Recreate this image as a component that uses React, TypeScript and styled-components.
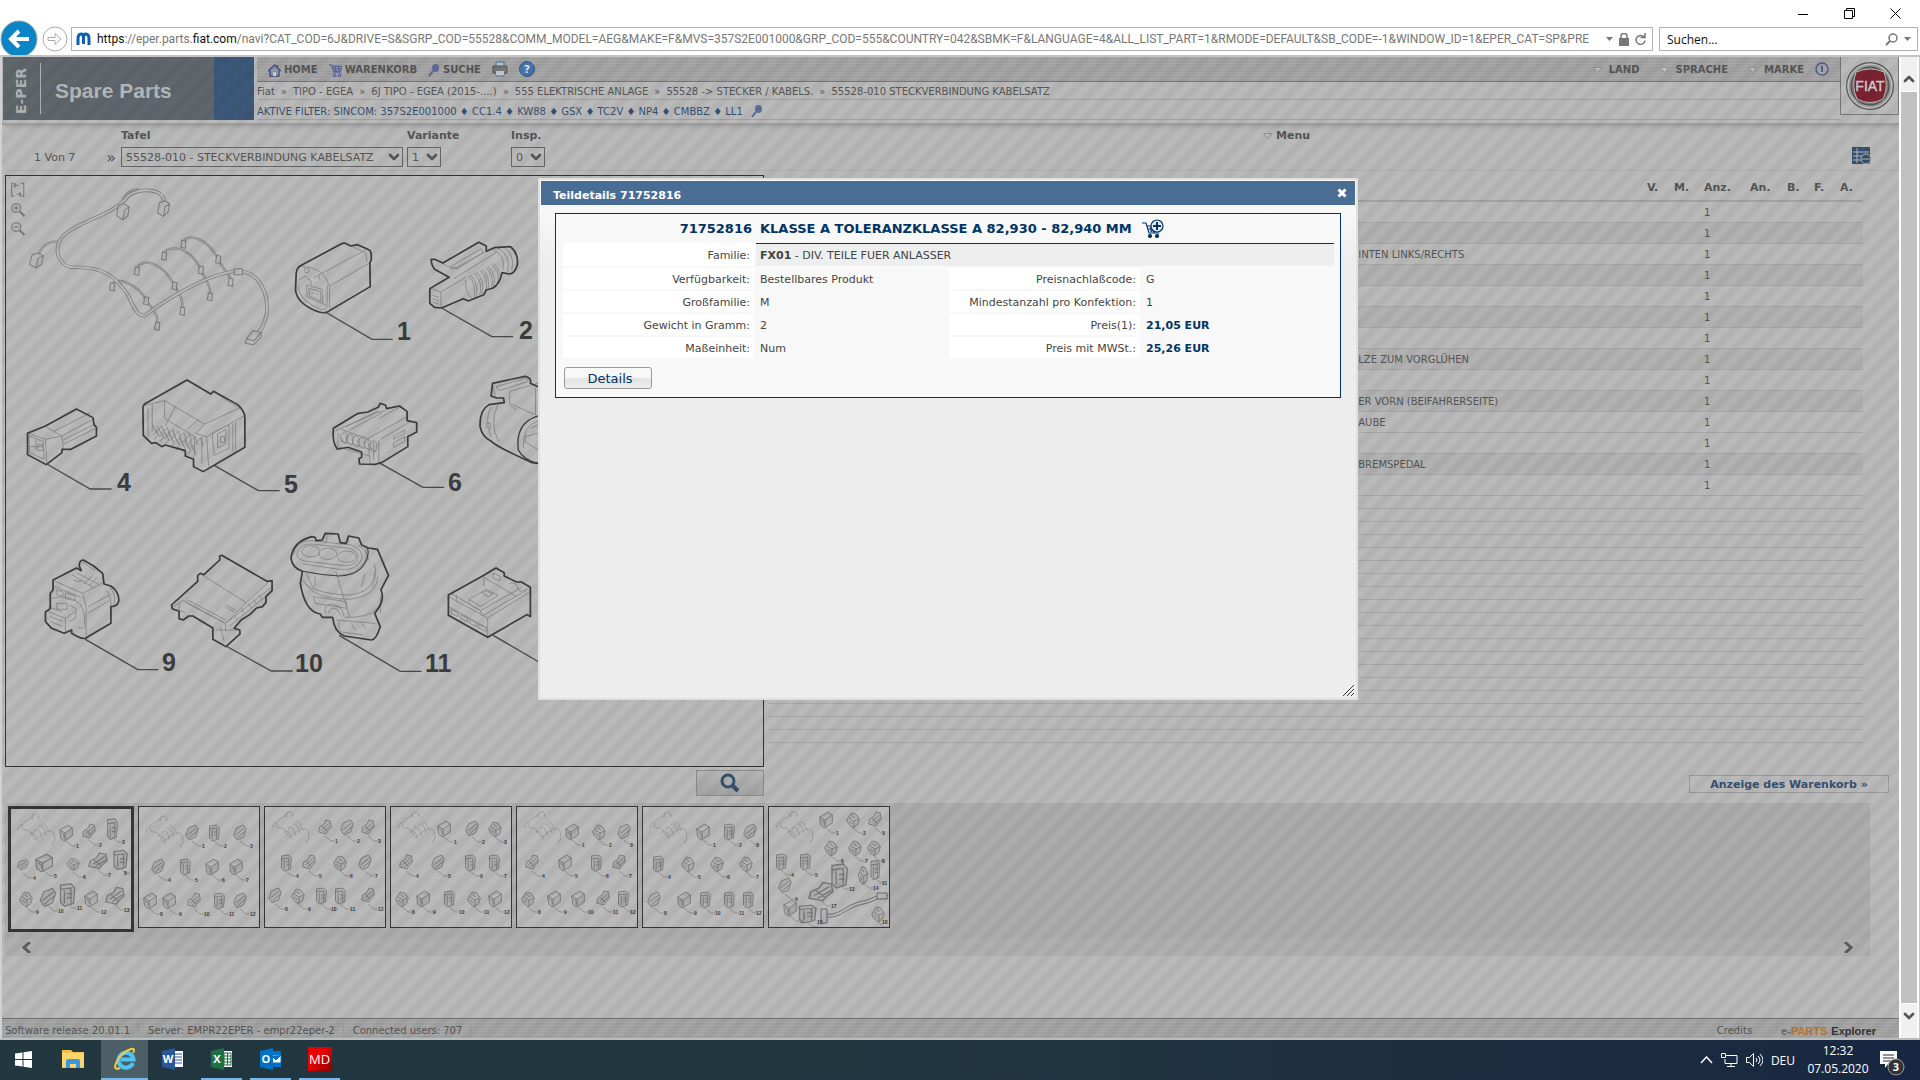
import React from "react";
import styled, { createGlobalStyle, css } from "styled-components";
import { ChevronDown, ChevronUp } from "lucide-react";

const uiFont = '"DejaVu Sans", Verdana, sans-serif';
const sysFont = '"Open Sans", "Noto Sans", sans-serif';
const navy = "#36506f";

const Global = createGlobalStyle`
  * { box-sizing: border-box; }
  body { margin: 0; font-family: ${uiFont}; font-size: 10px; color: #555; }
  button, input, select { font: inherit; color: inherit; margin: 0; padding: 0; }
  svg { display: block; }
`;

const Screen = styled.div`
  display: flex;
  flex-direction: column;
  height: 100vh;
  overflow: hidden;
  background: #fff;
`;

/* ---------- browser frame ---------- */
const Chrome = styled.header`
  flex: none;
  height: 57px;
  display: flex;
  flex-direction: column;
  overflow: hidden;
  font-family: ${sysFont};
  border-bottom: 2px solid #c4c4c4;
`;
const WindowBar = styled.div`
  height: 27px;
  flex: none;
  display: flex;
  justify-content: flex-end;
  padding: 0 2px;
`;
const WindowButton = styled.button`
  width: 46px;
  height: 27px;
  border: 0;
  background: none;
  display: flex;
  align-items: center;
  justify-content: center;
`;
const AddressBar = styled.div`
  height: 24px;
  display: flex;
  align-items: center;
  gap: 6px;
  padding-right: 2px;
`;
const NavButtons = styled.div`
  width: 65px;
  height: 24px;
  display: flex;
  align-items: center;
  gap: 4px;
`;
const RoundButton = styled.button<{ $size: number }>`
  flex: none;
  width: ${(p) => p.$size}px;
  height: ${(p) => p.$size}px;
  border: 0;
  background: none;
`;
const Field = styled.div<{ $fill?: boolean }>`
  height: 24px;
  border: 1px solid #b0b0b0;
  display: flex;
  align-items: center;
  gap: 6px;
  padding: 0 6px 0 4px;
  background: #fff;
  font-size: 12px;
  ${(p) => (p.$fill ? css`flex: 1; min-width: 0;` : css`flex: 0 0 259px;`)}
`;
const Url = styled.a`
  flex: 1;
  min-width: 0;
  overflow: hidden;
  white-space: nowrap;
  font-family: Roboto, sans-serif;
  font-size: 12px;
  color: #777;
  text-decoration: none;
  b { font-weight: 400; color: #111; }
`;
const SearchInput = styled.input`
  flex: 1;
  min-width: 0;
  border: 0;
  outline: 0;
  padding-left: 3px;
  color: #111;
  &::placeholder { color: #111; opacity: 1; }
`;

/* ---------- page ---------- */
const Viewport = styled.div`
  flex: 1;
  min-height: 0;
  display: flex;
  border-bottom: 2px solid #b9bcbd;
`;
const Page = styled.main`
  position: relative;
  flex: 1;
  min-width: 0;
  display: flex;
  flex-direction: column;
  border-left: 2px solid #d0d0d0;
  background: #b9b9b9;
`;
const Stripes = styled.div`
  position: absolute;
  inset: 0;
  pointer-events: none;
  background: linear-gradient(135deg, rgba(0,0,0,0.04) 25%, transparent 25%, transparent 50%, rgba(0,0,0,0.04) 50%, rgba(0,0,0,0.04) 75%, transparent 75%);
  background-size: 20px 20px;
`;
const scan = "repeating-linear-gradient(#a9a9a9 0 1px, #a1a1a1 1px 3px)";

const Header = styled.div`
  flex: none;
  display: flex;
  height: 68px;
  border-bottom: 2px solid #9f9f9f;
`;
const Brand = styled.div`
  width: 251px;
  height: 63px;
  margin-left: 1px;
  display: flex;
  align-items: center;
  background: #5f666c;
  border-right: 40px solid #3c5779;
`;
const BrandSide = styled.span`
  writing-mode: vertical-rl;
  transform: rotate(180deg);
  height: 51px;
  padding-left: 12px;
  margin-left: 11px;
  border-left: 1px solid #b0b3b5;
  font: 700 14px/14px "DejaVu Sans", sans-serif;
  color: #aeb1b4;
`;
const BrandName = styled.span`
  margin: 4px 0 0 14px;
  font: 700 21px/24px "Liberation Sans", Arial, sans-serif;
  color: #b4b7b9;
`;
const HeadRows = styled.div`
  flex: 1;
  min-width: 0;
  margin-left: 3px;
`;
const Toolbar = styled.nav`
  height: 25px;
  display: flex;
  align-items: center;
  padding: 0 11px;
  gap: 11px;
  background: ${scan};
  border-bottom: 1px solid #777;
  font-weight: 700;
`;
const ToolLink = styled.a`
  display: flex;
  align-items: center;
  gap: 3px;
  font-size: 10px;
  line-height: 14px;
  padding-top: 2px;
  color: #555;
  text-decoration: none;
`;
const MenuLinks = styled.div`
  display: flex;
  gap: 20px;
  ${ToolLink} { gap: 7px; padding: 1px 0 0; }
`;
const Spacer = styled.div<{ $grow?: number }>`flex: ${(p) => p.$grow ?? 1};`;
const CrumbRow = styled.div`
  display: flex;
  align-items: center;
  height: 18px;
  padding-top: 2px;
  border-bottom: 1px solid #a2a2a2;
  white-space: nowrap;
  gap: 6px;
  a { color: #555; text-decoration: none; }
`;
const FilterRow = styled(CrumbRow)`
  height: 20px;
  padding-top: 4px;
  gap: 8px;
  color: ${navy};
`;
const MakeLogo = styled.div`
  flex: none;
  width: 59px;
  height: 58px;
  border: 1px solid #777;
  border-top: 0;
  display: flex;
  align-items: center;
  justify-content: center;
`;

const Selectors = styled.section`
  flex: none;
  height: 46px;
  margin: 0 1px 0 3px;
  border-bottom: 1px solid #aeaeae;
  display: flex;
  padding-top: 4px;
  font-size: 11px;
  box-shadow: inset 0 4px 4px -3px #999;
`;
const Counter = styled.div`
  width: 116px;
  padding: 20px 5px 0 29px;
  display: flex;
  justify-content: space-between;
  line-height: 18px;
`;
const Guillemet = styled.span`
  font-size: 16px;
`;
const Picker = styled.div<{ $w: number; $gap?: number }>`
  width: ${(p) => p.$w}px;
  margin-right: ${(p) => p.$gap ?? 0}px;
  label { display: block; font-weight: 700; line-height: 14px; height: 18px; }
`;
const SelectBox = styled.div`
  position: relative;
  svg { position: absolute; right: 1px; top: 2px; pointer-events: none; }
`;
const Select = styled.select`
  appearance: none;
  width: 100%;
  height: 20px;
  padding: 1px 0 0 4px;
  border: 1px solid #666;
  border-radius: 0;
  background: transparent;
`;
const MenuLabel = styled.a`
  display: flex;
  gap: 4px;
  height: 14px;
  line-height: 14px;
  align-items: center;
  font-weight: 700;
  color: #555;
  text-decoration: none;
`;
const IconButton = styled.button<{ $m?: string }>`
  border: 0;
  background: none;
  margin: ${(p) => p.$m ?? "0"};
  height: max-content;
`;

const Work = styled.section`
  flex: none;
  display: grid;
  grid-template-columns: 40.3% 1fr;
  padding: 4px 10px 0 3px;
`;
const Viewer = styled.div`
  border: 1px solid #333;
  height: 592px;
  overflow: hidden;
`;
const Right = styled.div`
  padding: 0 26px 0 4px;
`;
const Parts = styled.table`
  width: 100%;
  table-layout: fixed;
  border-collapse: collapse;
  font-size: 10px;
  th { text-align: left; font-size: 11px; padding: 0; height: 26px; border-bottom: 2px solid #a2a2a2; }
  td { padding: 2px 0 0; line-height: 12px; white-space: nowrap; overflow: hidden; }
`;
const PartRow = styled.tr<{ $dark?: boolean; $empty?: boolean }>`
  height: ${(p) => (p.$empty ? 13 : 21)}px;
  background: ${(p) => (p.$dark ? "#b1b1b1" : "transparent")};
  border-bottom: 1px solid #a6a6a6;
`;
const Actions = styled.div`
  flex: none;
  height: 36px;
  display: flex;
  justify-content: space-between;
  align-items: flex-start;
  padding: 3px 10px 0 3px;
`;
const ActionLeft = styled.div`
  width: 40.3%;
  display: flex;
  justify-content: flex-end;
`;
const ZoomButton = styled.button`
  width: 68px;
  height: 26px;
  display: flex;
  align-items: center;
  justify-content: center;
  border: 1px solid #8b8b8b;
  background: linear-gradient(#b5b5b5, #a3a3a3);
`;
const CartButton = styled.button`
  width: 200px;
  height: 18px;
  margin-top: 5px;
  padding-top: 1px;
  border: 1px solid #999;
  background: transparent;
  font-weight: 700;
  font-size: 11px;
  line-height: 14px;
  color: ${navy};
`;

const Strip = styled.section`
  flex: none;
  margin: 0 29px 0 3px;
  background: #afafaf;
`;
const Thumbs = styled.div`
  height: 136px;
  padding: 3px;
  display: flex;
  align-items: flex-start;
  gap: 4px;
  background: #acacac;
`;
const Thumb = styled.button<{ $active?: boolean }>`
  flex: none;
  width: ${(p) => (p.$active ? 126 : 122)}px;
  height: ${(p) => (p.$active ? 126 : 122)}px;
  border: ${(p) => (p.$active ? 3 : 1)}px solid #363636;
  background: #b9b9b9;
`;
const Arrows = styled.div`
  height: 17px;
  display: flex;
  justify-content: space-between;
  align-items: center;
  padding: 0 17px;
`;

const Footer = styled.footer`
  flex: none;
  height: 20px;
  margin-top: auto;
  border-top: 1px solid #6e6e6e;
  background: ${scan};
  display: flex;
  align-items: center;
  padding: 4px 23px 0 3px;
  white-space: nowrap;
`;
const FootItem = styled.span`
  padding-right: 8px;
  margin-right: 9px;
  border-right: 1px solid #989898;
`;
const Explorer = styled.span`
  display: flex;
  align-items: center;
  gap: 4px;
  margin-left: 29px;
  font: 700 11px/14px "Liberation Sans", Arial, sans-serif;
  color: #333;
  em { font-style: normal; color: #666; }
  strong { color: #b9742c; }
`;

const Scroll = styled.aside`
  flex: none;
  width: 21px;
  display: flex;
  flex-direction: column;
  gap: 1px;
  padding: 0 2px;
  background: #fff;
  border-right: 1px solid #c8c8c8;
`;
const ScrollArrow = styled.button<{ $down?: boolean }>`
  height: 34px;
  padding: ${(p) => (p.$down ? "0 0 10px" : "10px 0 0")};
  border: 0;
  background: #f0f0f0;
  display: flex;
  align-items: center;
  justify-content: center;
`;
const ScrollThumb = styled.div`flex: 1; background: #c1c1c1;`;

/* ---------- detail window ---------- */
const Modal = styled.section`
  position: absolute;
  left: 536px;
  top: 121px;
  width: 820px;
  height: 522px;
  padding: 1px;
  border: 2px solid #e0e0e0;
  background: linear-gradient(#fafafa 20px, #ededed 80px);
  font-size: 11px;
  color: #444;
`;
const TitleBar = styled.header`
  height: 24px;
  margin-bottom: 8px;
  padding: 0 8px 0 12px;
  display: flex;
  align-items: center;
  justify-content: space-between;
  background: #4a6d96;
  color: #fff;
  font-weight: 700;
  span { padding-top: 4px; }
`;
const Card = styled.div`
  margin: 0 14px;
  padding: 3px 6px 8px 7px;
  border: 1px solid #036;
  background: #f8f8f8;
`;
const Details = styled.table`
  width: 100%;
  table-layout: fixed;
  border-collapse: separate;
  border-spacing: 0 2px;
  td, th { padding: 1px 4px 0; height: 21px; white-space: nowrap; }
`;
const Label = styled.th`
  background: #fff;
  border-right: 2px solid #f8f8f8;
  font-weight: 400;
  text-align: right;
`;
const TitleRow = styled.tr`
  && th, && td {
    height: 22px;
    padding: 0 4px 3px;
    font-size: 13px;
    line-height: 16px;
    color: #036;
  }
`;
const PartNo = styled.th`
  text-align: right;
`;
const PartTitle = styled.td`
  font-weight: 700;
  div { display: flex; align-items: center; height: 19px; gap: 10px; }
`;
const FamilyRow = styled.tr`
  height: 23px;
`;
const Family = styled.td`
  background: #eee;
  border-top: 1px solid #036;
`;
const Price = styled.td`color: #036; font-weight: 700;`;
const DetailsButton = styled.button`
  display: block;
  width: 88px;
  height: 22px;
  margin: 7px 0 0 1px;
  padding: 1px 0 0 4px;
  border: 1px solid #999;
  border-radius: 3px;
  background: linear-gradient(#f8f8f8 45%, #e2e2e2 55%, #efefef);
  color: #036;
  font-size: 13px;
  line-height: 18px;
`;
const Grip = styled.span`
  position: absolute;
  right: 1px;
  bottom: 1px;
`;

/* ---------- task bar ---------- */
const Taskbar = styled.footer`
  flex: none;
  height: 40px;
  display: flex;
  background: linear-gradient(90deg, #23373f, #213540 50%, #182741);
  font-family: ${sysFont};
  font-size: 12px;
  color: #fff;
`;
const Task = styled.button<{ $open?: boolean; $active?: boolean }>`
  width: ${(p) => (p.$active ? 47 : 41)}px;
  margin-right: ${(p) => (p.$active ? 4 : 8)}px;
  height: 40px;
  border: 0;
  border-bottom: 2px solid ${(p) => (p.$open || p.$active ? "#76b9ed" : "transparent")};
  background: ${(p) => (p.$active ? "#4c5e66" : "none")};
  display: flex;
  align-items: center;
  justify-content: center;
`;
const Tasks = styled.div`
  display: flex;
  flex: 1;
  padding-left: 3px;
`;
const MdIcon = styled.span`
  width: 24px;
  height: 24px;
  background: linear-gradient(135deg, #e90000 40%, #8a0000);
  color: #fff;
  font-size: 13px;
  line-height: 24px;
  text-align: center;
`;
const Tray = styled.div`
  display: flex;
  align-items: center;
  gap: 8px;
`;
const Clock = styled.time`
  width: 62px;
  margin-left: 4px;
  line-height: 18px;
  text-align: center;
`;
const Notice = styled.div`
  margin: 6px 14px 0 3px;
`;

/* ---------- drawings ---------- */
const heavy = { fill: "none", stroke: "#3d3d3d", strokeWidth: 5, strokeLinejoin: "round" as const };
const fine = { fill: "none", stroke: "#858585", strokeWidth: 2.5 };

const trunk = "M475 100 C485 55 400 50 370 80 C330 140 195 160 172 215 C155 260 185 290 210 292 C300 288 335 320 372 375 C392 425 405 440 420 437 C475 395 600 310 690 303 C765 305 790 400 768 455 C760 480 752 488 745 490";
const twigs = [
  "M165 215 C140 212 120 230 110 258",
  "M355 100 C360 70 380 60 400 58",
  "M325 345 C340 315 400 345 425 390 C440 420 460 430 457 458",
  "M398 295 C410 265 470 270 508 350 C530 380 530 400 530 415",
  "M476 250 C490 225 550 225 583 300 C600 335 612 350 610 372",
  "M533 215 C545 190 600 200 635 270 C645 295 665 310 670 330",
];
const plugs: [number, number, number][] = [
  [326, 350, 20], [398, 303, 20], [477, 258, 20], [533, 222, 20], [457, 468, 20],
  [530, 423, 20], [610, 380, 20], [670, 336, 20], [425, 392, 20], [507, 347, 20], [584, 300, 20], [634, 268, 20],
];
const Cable = ({ small = false }: { small?: boolean }) =>
  small ? (
    <g fill="none" stroke="#949494" strokeWidth="13">
      <path d={trunk} />
      {twigs.map((d) => <path key={d} d={d} />)}
      <path d="M110 258 l-20 30 M355 100 v40 M475 100 v30 M745 490 l-20 20 M325 345 v22 M398 295 v22" strokeWidth="20" />
    </g>
  ) : (
    <g fill="none" strokeLinecap="round">
      {twigs.map((d) => (
        <React.Fragment key={d}>
          <path d={d} stroke="#878787" strokeWidth={7} />
          <path d={d} stroke="#b9b9b9" strokeWidth={2} />
        </React.Fragment>
      ))}
      <path d={trunk} stroke="#828282" strokeWidth={11} />
      <path d={trunk} stroke="#b9b9b9" strokeWidth={6} />
      <g fill="#b5b5b5" stroke="#7c7c7c" strokeWidth={3}>
        {plugs.map(([x, y, h]) => (
          <path key={`${x}-${y}`} d={`M${x - 5} ${y - h / 2 - 2} l12 3 l-2 22 l-13 -3z`} />
        ))}
        <path d="M93 255 l15 -6 l18 8 l-5 25 l-16 12 l-19 -10z m12 39 l5 -28 l16 -9" />
        <path d="M343 108 l14 -8 l18 10 l-4 28 l-14 12 l-18 -12z m14 42 l4 -28 l14 -12" />
        <path d="M463 98 l16 -6 l14 10 l-5 24 l-14 13 l-16 -10z m12 40 l4 -28 l14 -8" />
        <path d="M716 506 l18 -24 l26 6 l-4 16 l-20 20 l-24 -4z m0 0 l22 6 l20 -24" />
        <path d="M680 296 h24 v18 h-24z" />
      </g>
    </g>
  );

const Illustration = () => (
  <svg width="757" height="590" viewBox="0 0 757 590" role="img" aria-label="Tafel 55528-010">
    <g transform="translate(-6 -6) scale(0.3444 0.3333)">
      <g fill="none" stroke="#777" strokeWidth="3">
        <path d="M42 40 h-8 v39 h8 M60 40 h9 v39 h-9 M40 46 h14 m-14 0 l6 -6 m-6 6 l6 6 M62 73 h-14 m14 0 l-6 -6 m6 6 l-6 6" />
        <circle cx="47" cy="114" r="13" /><path d="M40 114 h14 M47 107 v14" /><path d="M57 124 l14 14" strokeWidth="6" />
        <circle cx="47" cy="171" r="13" /><path d="M40 171 h14" /><path d="M57 181 l14 14" strokeWidth="6" />
      </g>
      <Cable />
      {/* part 1 */}
      <g {...fine}>
        <path d="M872 288 Q940 290 957 348 L1075 278 M957 348 V415 M925 315 L1065 238 M1022 228 L1062 250 L1066 275" />
        <path d="M890 345 L935 358 L938 402 L892 380z M897 355 l33 9 l2 30 l-33 -16z M868 330 l18 -12 l16 14 l2 14 M884 296 l12 -2 l2 12 l-12 2z M912 322 l14 -6 l2 12 M865 348 Q868 392 930 418 Q950 425 950 400 V345 M904 368 l6 2 M918 372 l6 2 M938 402 l10 4" />
      </g>
      <path {...heavy} d="M860 310 Q862 292 875 286 L990 222 Q998 217 1006 221 L1018 228 L1038 224 L1068 238 Q1078 242 1078 255 V270 L1074 278 L1075 350 L952 425 Q938 432 920 424 Q862 400 858 360z" />
      {/* part 2 */}
      <g {...fine}>
        <path d="M1308 290 L1398 236 L1402 248 L1328 296z M1318 326 L1440 248 M1284 280 L1316 298 L1410 245 M1432 238 Q1470 260 1460 300 M1446 234 Q1485 258 1474 304 M1466 234 Q1496 256 1486 300 M1252 356 L1280 366 V412 M1280 366 L1352 322 M1256 376 l18 6 M1256 386 l18 6 M1256 396 l18 6 M1352 330 Q1350 370 1372 388" />
        {[0, 17, 34, 51, 68].map((x) => <path key={x} d={`M${1360 + x} ${318 - x / 2} q26 25 16 ${70 - x / 5} M${1366 + x} ${315 - x / 2} q26 25 16 ${70 - x / 5}`} />)}
      </g>
      <path {...heavy} d="M1252 268 L1262 268 L1286 279 L1390 217 L1412 228 V244 L1435 233 L1482 230 Q1506 250 1502 285 Q1495 312 1478 312 L1458 308 Q1450 345 1430 355 L1412 360 L1405 374 L1390 380 L1360 393 L1345 386 L1282 414 L1262 412 L1248 400 V356 L1304 322 L1262 298 Q1252 285 1252 268z" />
      {/* part 4 */}
      <path {...fine} d="M80 790 L132 808 L136 880 M132 808 L180 798 M84 798 L126 815 L128 868 L86 848z M104 808 v32 M84 830 h42 M110 824 h14 v18 h-14z M132 770 L180 798 L184 836 M156 785 L262 728 M180 798 L270 748 M184 810 L272 764 M186 822 L276 776" />
      <path {...heavy} d="M80 790 L132 768 L222 717 L270 743 L273 764 L280 772 V798 L206 838 L180 838 V848 L134 884 L80 854z" />
      {/* part 5 */}
      <g {...fine}>
        <path d="M420 706 L478 692 L594 762 L568 792 M594 762 L696 714 M478 692 V745 M510 708 L480 768 M478 745 L565 800 M442 702 V784 M430 715 V800 M576 748 L540 782 M566 790 L600 800 L606 890 M616 790 L665 764 V835 L622 856z M632 792 l24 -14 v44 l-24 12z M640 800 h12 v18 h-12z M600 800 L708 738 M676 760 V846 M684 756 V842 M586 800 V880 M618 664 L690 712 M565 800 v55" />
        {[0, 1, 2, 3, 4, 5, 6, 7].map((i) => <path key={i} d={`M${440 + i * 16} ${760 + i * 8} l18 34 l-10 14 M${446 + i * 16} ${796 + i * 5} l24 -28 l8 26 M${452 + i * 14} ${778 + i * 6} l12 22`} />)}
      </g>
      <path {...heavy} d="M415 710 L420 702 L543 630 L612 672 L620 664 L690 704 Q712 725 711 745 V832 L590 905 L562 890 V868 L538 858 V842 L480 825 L470 830 L452 818 L440 820 L416 796z" />
      {/* part 6 */}
      <g {...fine}>
        <path d="M975 782 L1095 728 L1118 722 M990 778 L1068 806 L1185 738 M1068 806 L1075 880 M1085 815 V872 M982 790 L980 830 L1072 858 M1004 770 L1100 722 M1015 780 L1110 728 M1143 798 l32 -18 v10 l-32 18z M1143 818 l32 -18 v14 l-32 18z M1100 812 V878 M1108 806 L1190 756 M1160 712 L1100 745" />
        {[0, 1, 2, 3, 4, 5].map((i) => <path key={i} d={`M${988 + i * 17} ${796 + i * 5} l12 -10 l10 10 l-4 24 l-14 -6z M${992 + i * 17} ${810 + i * 5} l12 12`} />)}
      </g>
      <path {...heavy} d="M968 775 L1040 730 L1068 726 L1098 712 L1104 700 L1120 706 L1122 716 L1160 708 L1182 724 V752 L1210 758 V786 L1184 800 V830 L1108 878 L1090 883 L1044 882 L1042 866 L1050 862 V846 L1010 832 L980 838 Q964 820 968 775z" />
      {/* part 7 */}
      <path {...fine} d="M1430 640 L1438 680 M1440 650 L1530 624 L1535 634 L1450 662z M1480 664 V700 L1555 735 M1480 664 L1562 640 M1428 710 Q1405 740 1425 800 M1445 705 Q1420 760 1448 815 M1478 705 L1500 720 M1562 752 Q1515 770 1520 835 M1562 790 L1525 800 V815 L1562 840 M1540 775 l22 -10 M1412 760 h12 v14 h-12z M1555 735 v-80" />
      <path {...heavy} strokeWidth={4} d="M1562 738 Q1495 760 1505 840 Q1520 870 1562 880" />
      <path {...heavy} d="M1562 650 L1540 640 Q1545 625 1525 619 L1430 640 L1426 678 L1442 684 L1462 684 L1464 698 L1420 704 Q1392 720 1394 770 Q1400 800 1424 812 Q1440 830 1545 878 L1562 880" />
      <path fill="none" stroke="#4a4a4a" strokeWidth="4" d="M945 426 L1080 508 H1140 M1282 414 L1428 500 H1490 M136 882 L262 957 H324 M622 886 L750 962 H812 M1104 880 L1228 952 H1290" />
    </g>
    <g transform="translate(-6 304) scale(0.3444 0.3333)">
      {/* part 9 */}
      <path {...fine} d="M152 300 L240 340 L300 308 M158 320 L235 352 M240 340 L250 380 V465 M152 355 Q200 340 235 375 Q248 400 246 440 Q240 450 225 440 M165 330 l18 6 v14 l-18 -6z M190 338 l28 10 v14 l-28 -6z M210 285 L270 322 M222 278 L285 312 M235 305 l-22 -4 M245 312 l25 -26 M258 318 l25 -26 M140 395 L190 415 L215 395 M190 415 V455 M140 380 L180 395 M146 410 l36 14 M146 425 l36 14 M318 322 Q340 340 330 378 M308 330 Q325 350 322 380 M165 370 h30 v18 h-30z M200 375 l20 10 v30 l-20 10 M255 400 L318 362 M256 380 L318 345 M235 243 l40 28" />
      <path {...heavy} d="M154 300 L222 264 L236 272 L230 258 Q230 240 242 240 L272 258 L298 280 L302 312 L322 318 Q346 335 345 362 Q342 380 322 380 V430 L248 475 Q235 478 208 460 V450 L186 460 L150 445 L132 425 V396 L146 386 V340 L154 330z" />
      {/* part 10 */}
      <path {...fine} d="M580 280 L715 368 L780 306 M715 368 L655 430 M530 360 L655 430 V455 M500 382 L530 362 M655 430 L790 320 M665 440 L788 335 M545 360 l110 60 M540 368 l110 60 M640 440 L650 482 M652 378 l28 18 M658 374 l28 18 M720 370 l10 14 M735 358 l10 14 M700 385 l8 14 M680 410 l10 10 M752 345 l8 14 M520 370 v20 l18 8 M628 450 L690 450" />
      <path {...heavy} d="M498 375 L574 304 V286 L582 280 L592 284 L638 240 V228 L644 226 L775 304 L790 302 V332 L772 350 V368 L762 380 L745 384 L725 404 L700 420 L680 445 L696 450 L697 462 L656 500 L618 478 V444 L560 408 H548 L532 420 L520 416 V394 L500 386z" />
      {/* part 11 */}
      <g {...fine}>
        <ellipse cx="902" cy="214" rx="26" ry="17" /><ellipse cx="952" cy="221" rx="26" ry="17" /><ellipse cx="1007" cy="230" rx="27" ry="17" />
        <path d="M862 222 Q870 190 905 192 L1015 205 Q1045 215 1038 238 Q1025 262 990 256 L890 244 Q862 240 862 222z M852 222 Q862 180 905 182 L1020 195 Q1058 210 1050 240 Q1030 275 985 268 L880 252 M1040 196 Q1070 210 1062 240 Q1035 290 985 285 M890 280 Q900 310 910 322 M1060 280 L1050 320 M880 300 Q900 340 1010 345 Q1085 340 1088 275 M886 310 Q910 355 1012 358 Q1095 350 1096 290 M1085 250 Q1100 280 1080 320 M975 275 L1015 410 M910 350 L1005 365 L1008 385 L915 370z M945 400 Q940 375 960 372 Q995 375 998 408 M955 400 Q955 385 970 385 Q985 390 988 405 M985 425 Q980 445 990 450 M1020 430 l12 20 M1050 430 l12 16 M975 420 L1090 430 M985 455 l70 10 M915 290 v30 M950 165 l-4 26 M1012 175 l-2 18 M1105 345 V400 M1060 200 L1070 240 M1000 412 Q1070 415 1095 385" />
      </g>
      <path {...heavy} strokeWidth={3} d="M878 274 Q930 285 985 288 Q1050 285 1066 235 Q1072 215 1066 203" />
      <path {...heavy} d="M845 235 Q850 185 905 170 L915 172 L918 182 L936 180 L944 160 L982 162 L988 188 L1005 190 L1012 168 L1042 174 L1050 195 L1070 204 L1096 208 L1128 286 L1106 330 Q1120 360 1088 400 L1104 440 Q1092 480 1078 480 L1000 468 Q970 455 966 412 L936 412 L930 402 Q885 395 872 310 L878 274 Q848 262 845 235z" />
      {/* part 12 */}
      <path {...fine} d="M1302 350 L1416 414 V468 M1416 414 L1540 335 M1302 380 L1416 445 M1310 340 L1395 392 L1400 408 L1530 330 M1395 392 L1515 322 M1362 358 L1412 328 L1446 346 L1396 380z M1362 358 V372 L1396 392 M1400 340 l12 -8 l18 10 l-12 8z M1405 292 L1500 350 M1405 292 V320 M1325 345 v22 M1310 388 l20 10 v12 l-20 -10z M1338 404 l20 10 v12 l-20 -10z M1364 418 l20 10 v12 l-20 -10z M1390 432 l22 12 v10 l-22 -10z M1432 280 l20 8 v14 l-20 -6z M1480 310 q20 -8 25 20 q5 10 35 -8" />
      <path {...heavy} d="M1302 345 L1405 286 L1440 264 L1464 278 V288 L1500 306 L1514 306 L1540 322 V410 L1530 404 L1416 472 L1302 406z" />
      <path fill="none" stroke="#4a4a4a" strokeWidth="4" d="M248 478 L400 569 H460 M656 498 L788 573 H850 M985 466 L1162 574 H1224 M1432 466 L1580 555" />
    </g>
    <g fontFamily="Liberation Sans, Arial, sans-serif" fontWeight="700" fontSize="25" fill="#3d3d3d">
      <text x="391" y="164">1</text><text x="513" y="163">2</text>
      <text x="111" y="315">4</text><text x="278" y="317">5</text><text x="442" y="315">6</text>
      <text x="156" y="495">9</text><text x="289" y="496">10</text><text x="419" y="496">11</text>
    </g>
  </svg>
);

const shapes = [
  "M-7 -3 L2 -8 L7 -5 L7 3 L-2 8 L-6 5z M-7 -3 L-1 0 L7 -5 M-1 0 V7 M-5 0 l3 2 v3",
  "M-7 4 L-6 -1 L-1 -4 L1 -8 L6 -7 L7 -1 L3 3 L1 6 L-3 5z M-4 2 L5 -5 M-2 4 L6 -2 M-3 -2 l5 5",
  "M-5 -7 L3 -8 L6 -5 L5 6 L-2 8 L-5 5z M-5 -4 L3 -5 V6 M-2 -3 V6 M0 -1 h4 M0 2 h4",
  "M-7 0 L-2 -7 L3 -6 L7 -1 L5 5 L0 8 L-5 4z M-4 -2 L1 1 L6 -1 M1 1 V7 M-2 -5 l4 3 M-4 1 l3 3",
  "M-7 2 L-4 -5 L4 -8 L7 -4 L4 4 L-3 7z M-5 2 L5 -5 M-3 5 L6 -2",
];
type Part = { x: number; y: number; s: number; w?: number; h?: number; n: number };
const row = (y: number, xs: number[], start: number): Part[] =>
  xs.map((x, i) => ({ x, y, s: (x + y + i) % 5, n: start + i }));

const boards: Part[][] = [
  [
    { x: 55, y: 24, s: 0, n: 1 }, { x: 78, y: 23, s: 1, n: 2 }, { x: 101, y: 20, s: 2, h: 1.3, n: 3 },
    { x: 12, y: 56, s: 4, w: 0.8, h: 0.7, n: 4 }, { x: 33, y: 54, s: 0, w: 1.2, h: 1.1, n: 5 }, { x: 62, y: 55, s: 3, w: 0.9, h: 0.8, n: 6 },
    { x: 87, y: 53, s: 1, w: 1.3, h: 1.1, n: 7 }, { x: 109, y: 51, s: 2, w: 1.2, h: 1.2, n: 8 },
    { x: 15, y: 90, s: 3, w: 0.9, n: 9 }, { x: 37, y: 89, s: 4, w: 1.1, h: 1.2, n: 10 }, { x: 56, y: 86, s: 2, w: 1.3, h: 1.4, n: 11 },
    { x: 80, y: 90, s: 0, n: 12 }, { x: 104, y: 88, s: 1, w: 1.3, h: 1.2, n: 13 },
  ],
  [...row(26, [53, 75, 101], 1), ...row(60, [19, 46, 73, 97], 4), ...row(94, [11, 30, 55, 80, 101], 8)],
  [...row(21, [60, 82, 103], 1), ...row(56, [21, 44, 75, 100], 4), ...row(89, [10, 33, 56, 75, 103], 8)],
  [...row(22, [53, 81, 104], 1), ...row(56, [15, 47, 79, 103], 4), ...row(92, [11, 32, 58, 83, 104], 8)],
  [...row(25, [55, 82, 107], 1), ...row(56, [15, 48, 79, 102], 4), ...row(92, [11, 37, 61, 86, 106], 8)],
  [...row(25, [60, 86, 107], 1), ...row(57, [15, 45, 74, 103], 4), ...row(93, [11, 41, 62, 86, 105], 8)],
  [
    ...row(13, [57, 84, 106], 1), ...row(41, [62, 86, 105], 6), ...row(55, [12, 36], 4),
    { x: 70, y: 69, s: 2, w: 1.4, h: 1.5, n: 13 }, { x: 94, y: 68, s: 3, w: 0.7, h: 1.2, n: 14 }, { x: 106, y: 63, s: 2, w: 0.8, h: 1.2, n: 11 },
    { x: 16, y: 79, s: 4, n: 9 }, { x: 52, y: 86, s: 1, w: 1.7, h: 1.3, n: 17 }, { x: 21, y: 101, s: 0, n: 16 },
    { x: 38, y: 107, s: 2, w: 1.5, h: 1.1, n: 15 }, { x: 109, y: 107, s: 3, n: 18 },
  ],
];

const Board = ({ parts, last, low }: { parts: Part[]; last: boolean; low: boolean }) => (
  <svg width="120" height="120" viewBox="0 0 120 120" aria-hidden="true">
    <g transform={`translate(2 ${low ? 5 : 1}) scale(0.054 0.068)`}><Cable small /></g>
    {last && (
      <g fill="none">
        <path d="M56 108 C70 112 78 98 92 96 S106 88 119 90" stroke="#777" strokeWidth="4" />
        <path d="M56 108 C70 112 78 98 92 96 S106 88 119 90" stroke="#b9b9b9" strokeWidth="2" />
        <path d="M52 102 h6 v14 h-6z M108 86 h10 v6 h-10z" fill="#b4b4b4" stroke="#666" />
      </g>
    )}
    {parts.map((p, i) => (
      <g key={i}>
        <path d={shapes[p.s]} transform={`translate(${p.x} ${p.y}) scale(${p.w ?? 0.9} ${p.h ?? 1})`} fill="#adadad" stroke="#7a7a7a" strokeWidth="1" />
        <path d={`M${p.x} ${p.y + 8} l6 5 h4`} fill="none" stroke="#858585" strokeWidth="0.8" />
        <text x={Math.min(p.x + 10, 113)} y={Math.min(p.y + 15, 117)} fontFamily="Liberation Sans, Arial, sans-serif" fontWeight="700" fontSize="5" fill="#3d3d3d">{p.n}</text>
      </g>
    ))}
  </svg>
);

const CartIcon = ({ color, plus }: { color: string; plus?: boolean }) =>
  plus ? (
    <svg width="23" height="20" viewBox="0 0 23 20" fill="none" stroke={color} strokeWidth="1.2">
      <path d="M0 4 h4 l3 10 h10 M5 7 h4 M6 10 h4 M9 12 h6 M9 8 v5 M12 12 v2" />
      <circle cx="8" cy="17" r="1.5" fill={color} /><circle cx="15" cy="17" r="1.5" fill={color} />
      <circle cx="15" cy="7" r="6" fill="#e4eaf3" /><path d="M15 3 v8 M11 7 h8" strokeWidth="2" />
    </svg>
  ) : (
    <svg width="13" height="13" viewBox="0 0 16 16" fill="none" stroke={color} strokeWidth="1.5">
      <path d="M0 1 h3 l3 9 h9 M4 3 h12 l-2 6 H6 M5 6 h10 M8 3 v6 M12 3 v6" /><circle cx="7" cy="14" r="1.5" /><circle cx="13" cy="14" r="1.5" />
    </svg>
  );
const Pin = () => (
  <svg width="12" height="13" viewBox="0 0 12 13"><ellipse cx="7.5" cy="4" rx="3.5" ry="4" fill="#5f6d9b" /><path d="M5 7 L1 12" stroke="#5a6690" strokeWidth="2" /></svg>
);
const Tri = () => (
  <svg width="9" height="6" viewBox="0 0 9 6"><path d="M.5 .5 h8 l-4 5z" fill="#c4c4c4" stroke="#888" strokeWidth="0.8" /></svg>
);
const FiatBadge = () => (
  <svg width="50" height="50" viewBox="0 0 50 50" role="img" aria-label="FIAT">
    <circle cx="25" cy="25" r="24" fill="#555" /><circle cx="25" cy="25" r="22" fill="#999" stroke="#c2c2c2" strokeWidth="1.5" />
    <circle cx="25" cy="25" r="19" fill="#777" stroke="#444" />
    <path d="M11 11 Q25 5 39 11 Q44 25 38 38 Q25 45 12 38 Q6 25 11 11z" fill="#7b2231" stroke="#b5b5b5" />
    <text x="25" y="30" textAnchor="middle" fontFamily="Liberation Sans Narrow, Liberation Sans, sans-serif" fontSize="14" fill="#d0d0d0" stroke="#d0d0d0" strokeWidth="0.4">FIAT</text>
  </svg>
);
const OfficeIcon = ({ letter, color, kind }: { letter: string; color: string; kind: "w" | "x" | "o" }) => (
  <svg width="22" height="22" viewBox="0 0 22 22">
    <path d="M12 3 h9 v16 h-9z" fill={kind === "o" ? color : "#fff"} />
    {kind === "w" && <path d="M13 6 h7 M13 9 h7 M13 12 h7 M13 15 h7" stroke={color} />}
    {kind === "x" && <path d="M13 5 h7 v12 h-7z M13 8 h7 M13 11 h7 M13 14 h7 M16.5 5 v12" stroke={color} fill="none" />}
    {kind === "o" && <path d="M12 7 h9 v8 h-9z M12 8 l4 4 l5 -5" fill="#fff" stroke={color} />}
    <path d="M0 3 L13 0 V22 L0 19z" fill={color} />
    <text x="6" y="15" textAnchor="middle" fontSize="11" fontWeight="700" fontFamily="Open Sans, sans-serif" fill="#fff">{letter}</text>
  </svg>
);

const crumbs = ["Fiat", "TIPO - EGEA", "6J TIPO - EGEA (2015-....)", "555 ELEKTRISCHE ANLAGE", "55528 -> STECKER / KABELS.", "55528-010 STECKVERBINDUNG KABELSATZ"];
const rows: [string, boolean][] = [
  ["", false], ["", true], ["INTEN LINKS/RECHTS", false], ["", true], ["", false], ["", true], ["", false],
  ["LZE ZUM VORGLÜHEN", true], ["", false], ["ER VORN (BEIFAHRERSEITE)", true], ["AUBE", false], ["", false],
  ["BREMSPEDAL", true], ["", false],
];
const colWidths = [27, 30, 46, 37, 27, 26, 23];

export default function App() {
  return (
    <Screen>
      <Global />
      <Chrome>
        <WindowBar>
          <WindowButton aria-label="Minimieren"><svg width="10" height="10"><path d="M0 5.5 h10" stroke="#000" /></svg></WindowButton>
          <WindowButton aria-label="Verkleinern"><svg width="11" height="11" fill="none" stroke="#000"><path d="M.5 2.5 h8 v8 h-8z M2.5 2.5 v-2 h8 v8 h-2" /></svg></WindowButton>
          <WindowButton aria-label="Schließen"><svg width="11" height="11"><path d="M.5 .5 l10 10 M10.5 .5 l-10 10" stroke="#000" /></svg></WindowButton>
        </WindowBar>
        <AddressBar>
          <NavButtons>
            <RoundButton $size={38} aria-label="Zurück">
              <svg width="38" height="38"><circle cx="19" cy="19" r="18" fill="#0d84c6" stroke="#8aa" /><path d="M29 19 H12 M19 11 L11 19 L19 27" fill="none" stroke="#fff" strokeWidth="4" /></svg>
            </RoundButton>
            <RoundButton $size={26} aria-label="Vorwärts">
              <svg width="26" height="26"><circle cx="13" cy="13" r="12" fill="#fff" stroke="#aaa" /><path d="M6 11.5 h7 v-4 l6 5.5 l-6 5.5 v-4 h-7z" fill="none" stroke="#aaa" /></svg>
            </RoundButton>
          </NavButtons>
          <Field $fill>
            <svg width="15" height="14" viewBox="0 0 15 14"><path d="M2 13 V7 Q2 2 5 2 Q7.5 2 7.5 6 V12 M7.5 6 Q7.5 2 10 2 Q13 2 13 7 V13" fill="none" stroke="#0a5fae" strokeWidth="3" /></svg>
            <Url href="#"><b>https</b>://eper.parts.<b>fiat.com</b>/navi?CAT_COD=6J&amp;DRIVE=S&amp;SGRP_COD=55528&amp;COMM_MODEL=AEG&amp;MAKE=F&amp;MVS=357S2E001000&amp;GRP_COD=555&amp;COUNTRY=042&amp;SBMK=F&amp;LANGUAGE=4&amp;ALL_LIST_PART=1&amp;RMODE=DEFAULT&amp;SB_CODE=-1&amp;WINDOW_ID=1&amp;EPER_CAT=SP&amp;PRE</Url>
            <svg width="7" height="4"><path d="M0 0 h7 l-3.5 4z" fill="#777" /></svg>
            <svg width="10" height="13" viewBox="0 0 10 13"><path d="M0 5 h10 v8 h-10z" fill="#777" /><path d="M2 6 V3 a3 2.5 0 0 1 6 0 V6" fill="none" stroke="#777" strokeWidth="1.5" /></svg>
            <svg width="11" height="12" viewBox="0 0 11 12"><path d="M9 4 A4.5 4.5 0 1 0 10 7.5 M10 0 V4.5 H5.5" fill="none" stroke="#777" strokeWidth="1.5" /></svg>
          </Field>
          <Field>
            <SearchInput aria-label="Suchen" placeholder="Suchen..." />
            <svg width="13" height="13"><circle cx="8" cy="5" r="4" fill="none" stroke="#777" strokeWidth="1.5" /><path d="M5 8 L1 12" stroke="#777" strokeWidth="2" /></svg>
            <svg width="7" height="4"><path d="M0 0 h7 l-3.5 4z" fill="#777" /></svg>
          </Field>
        </AddressBar>
      </Chrome>

      <Viewport>
        <Page>
          <Header>
            <Brand><BrandSide>E-PER</BrandSide><BrandName>Spare Parts</BrandName></Brand>
            <HeadRows>
              <Toolbar>
                <ToolLink href="#">
                  <svg width="13" height="13" viewBox="0 0 13 13"><path d="M0 7 L6.5 1 L13 7 M2 6 V12 H11 V6 M9.5 1 v3" fill="#8992b0" stroke="#4a557f" strokeWidth="1.5" /><path d="M5 12 V8 h3 v4" fill="#ccc" /></svg>
                  HOME
                </ToolLink>
                <ToolLink href="#"><CartIcon color="#59659a" />WARENKORB</ToolLink>
                <ToolLink href="#"><Pin />SUCHE</ToolLink>
                <IconButton aria-label="Drucken">
                  <svg width="16" height="16" viewBox="0 0 16 16"><path d="M4 1 h8 v5 h-8z M4 10 h8 v5 h-8z" fill="#b5c6d2" stroke="#55758c" /><path d="M1 5 h14 v7 h-14z" fill="#777" stroke="#555" /><path d="M4 10 h8 v4 h-8z" fill="#bcc6cc" /></svg>
                </IconButton>
                <IconButton aria-label="Hilfe">
                  <svg width="16" height="16" viewBox="0 0 16 16"><circle cx="8" cy="8" r="7.5" fill="#4674ad" stroke="#345a8c" /><text x="8" y="12" textAnchor="middle" fontSize="11" fontWeight="700" fill="#ddd">?</text></svg>
                </IconButton>
                <Spacer />
                <MenuLinks>
                  <ToolLink href="#"><Tri />LAND</ToolLink>
                  <ToolLink href="#"><Tri />SPRACHE</ToolLink>
                  <ToolLink href="#"><Tri />MARKE</ToolLink>
                </MenuLinks>
                <svg width="14" height="14" viewBox="0 0 14 14"><circle cx="7" cy="7" r="6" fill="none" stroke="#4f5e8d" strokeWidth="1.5" /><path d="M7 4 v6" stroke="#4f5e8d" strokeWidth="2" /></svg>
              </Toolbar>
              <CrumbRow>
                {crumbs.map((c, i) => (
                  <React.Fragment key={c}>{i > 0 && <span>»</span>}<a href="#">{c}</a></React.Fragment>
                ))}
              </CrumbRow>
              <FilterRow>AKTIVE FILTER: SINCOM: 357S2E001000 ♦ CC1.4 ♦ KW88 ♦ GSX ♦ TC2V ♦ NP4 ♦ CMBBZ ♦ LL1 <Pin /></FilterRow>
            </HeadRows>
            <MakeLogo><FiatBadge /></MakeLogo>
          </Header>

          <Selectors>
            <Counter><span>1 Von 7</span><Guillemet>»</Guillemet></Counter>
            <Picker $w={282} $gap={4}>
              <label htmlFor="tafel">Tafel</label>
              <SelectBox><Select id="tafel"><option>55528-010 - STECKVERBINDUNG KABELSATZ</option></Select><ChevronDown size={16} strokeWidth={4} /></SelectBox>
            </Picker>
            <Picker $w={34} $gap={70}>
              <label htmlFor="variante">Variante</label>
              <SelectBox><Select id="variante"><option>1</option></Select><ChevronDown size={16} strokeWidth={4} /></SelectBox>
            </Picker>
            <Picker $w={34}>
              <label htmlFor="insp">Insp.</label>
              <SelectBox><Select id="insp"><option>0</option></Select><ChevronDown size={16} strokeWidth={4} /></SelectBox>
            </Picker>
            <Spacer $grow={53} />
            <MenuLabel href="#"><Tri />Menu</MenuLabel>
            <Spacer $grow={40} />
            <IconButton $m="18px 27px 0 0" aria-label="Liste">
              <svg width="19" height="17" viewBox="0 0 19 17"><path d="M0 0 h18 v17 h-18z" fill={navy} /><path d="M1 5 h16 M1 9 h10 M1 13 h9 M5 1 v15" stroke="#b5b5b5" /><circle cx="14" cy="12" r="5" fill={navy} stroke="#b5b5b5" /><path d="M10 12 h8" stroke="#b5b5b5" /></svg>
            </IconButton>
          </Selectors>

          <Work>
            <Viewer><Illustration /></Viewer>
            <Right>
              <Parts>
                <colgroup>
                  <col style={{ width: 590 }} /><col />
                  {colWidths.map((w, i) => <col key={i} style={{ width: w }} />)}
                </colgroup>
                <thead>
                  <tr><th /><th />{["V.", "M.", "Anz.", "An.", "B.", "F.", "A."].map((h) => <th key={h}>{h}</th>)}</tr>
                </thead>
                <tbody>
                  {rows.map(([text, dark], i) => (
                    <PartRow key={i} $dark={dark}><td /><td>{text}</td><td /><td /><td>1</td><td /><td /><td /><td /></PartRow>
                  ))}
                  {Array.from({ length: 19 }, (_, i) => <PartRow key={i} $empty><td colSpan={9} /></PartRow>)}
                </tbody>
              </Parts>
            </Right>
          </Work>

          <Actions>
            <ActionLeft>
              <ZoomButton aria-label="Suchen"><svg width="20" height="20"><circle cx="8" cy="8" r="6" fill="none" stroke={navy} strokeWidth="3" /><path d="M12 12 L18 18" stroke={navy} strokeWidth="4" /></svg></ZoomButton>
            </ActionLeft>
            <CartButton>Anzeige des Warenkorb »</CartButton>
          </Actions>

          <Strip>
            <Thumbs>
              {boards.map((parts, i) => (
                <Thumb key={i} $active={i === 0} aria-label={`Tafel ${i + 1}`}><Board parts={parts} last={i === 6} low={i === 1} /></Thumb>
              ))}
            </Thumbs>
            <Arrows>
              <IconButton aria-label="Zurück"><svg width="9" height="11"><path d="M8 0 L2 5.5 L8 11" fill="none" stroke="#5b5b5b" strokeWidth="3" /></svg></IconButton>
              <IconButton aria-label="Weiter"><svg width="9" height="11"><path d="M1 0 L7 5.5 L1 11" fill="none" stroke="#5b5b5b" strokeWidth="3" /></svg></IconButton>
            </Arrows>
          </Strip>

          <Footer>
            <FootItem>Software release 20.01.1</FootItem>
            <FootItem>Server: EMPR22EPER - empr22eper-2</FootItem>
            <FootItem>Connected users: 707</FootItem>
            <Spacer />
            <span>Credits</span>
            <Explorer><span><em>e-</em><strong>PARTS</strong></span>Explorer</Explorer>
          </Footer>
          <Stripes />

          <Modal role="dialog" aria-label="Teildetails 71752816">
            <TitleBar>
              <span>Teildetails 71752816</span>
              <IconButton aria-label="Schließen"><svg width="10" height="10"><path d="M1.5 1.5 l7 7 M8.5 1.5 l-7 7" stroke="#fff" strokeWidth="3" /></svg></IconButton>
            </TitleBar>
            <Card>
              <Details>
                <colgroup><col style={{ width: 193 }} /><col style={{ width: 193 }} /><col style={{ width: 193 }} /><col /></colgroup>
                <tbody>
                  <TitleRow>
                    <PartNo>71752816</PartNo>
                    <PartTitle colSpan={3}><div>KLASSE A TOLERANZKLASSE A 82,930 - 82,940 MM <CartIcon color="#036" plus /></div></PartTitle>
                  </TitleRow>
                  <FamilyRow><Label>Familie:</Label><Family colSpan={3}><b>FX01</b> - DIV. TEILE FUER ANLASSER</Family></FamilyRow>
                  <tr><Label>Verfügbarkeit:</Label><td>Bestellbares Produkt</td><Label>Preisnachlaßcode:</Label><td>G</td></tr>
                  <tr><Label>Großfamilie:</Label><td>M</td><Label>Mindestanzahl pro Konfektion:</Label><td>1</td></tr>
                  <tr><Label>Gewicht in Gramm:</Label><td>2</td><Label>Preis(1):</Label><Price>21,05 EUR</Price></tr>
                  <tr><Label>Maßeinheit:</Label><td>Num</td><Label>Preis mit MWSt.:</Label><Price>25,26 EUR</Price></tr>
                </tbody>
              </Details>
              <DetailsButton>Details</DetailsButton>
            </Card>
            <Grip><svg width="12" height="12"><path d="M0 11 L11 0 M4 11 L11 4 M8 11 L11 8" stroke="#333" /></svg></Grip>
          </Modal>
        </Page>
        <Scroll>
          <ScrollArrow aria-label="Nach oben"><ChevronUp size={16} strokeWidth={4} color="#555" /></ScrollArrow>
          <ScrollThumb />
          <ScrollArrow $down aria-label="Nach unten"><ChevronDown size={16} strokeWidth={4} color="#555" /></ScrollArrow>
        </Scroll>
      </Viewport>

      <Taskbar>
        <Tasks>
          <Task aria-label="Start"><svg width="17" height="17" viewBox="0 0 17 17" fill="#fff"><path d="M0 2.5 L7.5 1.5 V8 H0z M8.5 1.3 L17 0 V8 H8.5z M0 9 H7.5 V15.5 L0 14.5z M8.5 9 H17 V17 L8.5 15.7z" /></svg></Task>
          <Task aria-label="Explorer"><svg width="22" height="20" viewBox="0 0 22 20"><path d="M0 1 h9 l2 2 h11 v16 h-22z" fill="#f4c04a" /><path d="M0 4 h22 v14 h-22z" fill="#fcd66f" /><path d="M4 19 v-7 q0 -2 2 -2 h10 q2 0 2 2 v7 h-4 v-4 h-6 v4z" fill="#3d97dd" /></svg></Task>
          <Task $active aria-label="Internet Explorer">
            <svg width="24" height="24" viewBox="0 0 24 24" fill="none"><path d="M20 16 A7.5 7.5 0 1 1 20.5 12.5 H8" stroke="#4fc3f5" strokeWidth="4" /><path d="M20 6 Q23 1 18 2 Q8 5 3 16 Q0 24 7 21" stroke="#f5cf3a" strokeWidth="2" /></svg>
          </Task>
          <Task aria-label="Word"><OfficeIcon letter="W" color="#2a579a" kind="w" /></Task>
          <Task $open aria-label="Excel"><OfficeIcon letter="X" color="#1e7145" kind="x" /></Task>
          <Task $open aria-label="Outlook"><OfficeIcon letter="O" color="#0072c6" kind="o" /></Task>
          <Task $open><MdIcon>MD</MdIcon></Task>
        </Tasks>
        <Tray>
          <svg width="13" height="8"><path d="M1 7 L6.5 1 L12 7" fill="none" stroke="#fff" strokeWidth="1.5" /></svg>
          <svg width="17" height="14" fill="none" stroke="#fff"><path d="M4 2.5 h12 v8 h-12 V6 M10 10.5 v3 M6 13.5 h8 M.5 .5 h4 v4 h-4z" /></svg>
          <svg width="17" height="14" fill="none" stroke="#fff"><path d="M.5 4.5 h3 l4 -4 v13 l-4 -4 h-3z M10 5 q2 2 0 4 M12 3 q4 4 0 8 M14 1 q6 6 0 12" /></svg>
          <span>DEU</span>
          <Clock>12:32<br />07.05.2020</Clock>
          <Notice>
            <svg width="26" height="28" viewBox="0 0 26 28"><path d="M0 2 h17 v13 h-9 l-3 4 v-4 h-5z" fill="#fff" /><path d="M3 6 h11 M3 9 h11 M3 12 h8" stroke="#1a2a42" /><circle cx="16" cy="18" r="8" fill="#333" stroke="#999" /><text x="16" y="22" textAnchor="middle" fontFamily="Open Sans, sans-serif" fontSize="11" fontWeight="700" fill="#fff">3</text></svg>
          </Notice>
        </Tray>
      </Taskbar>
    </Screen>
  );
}
